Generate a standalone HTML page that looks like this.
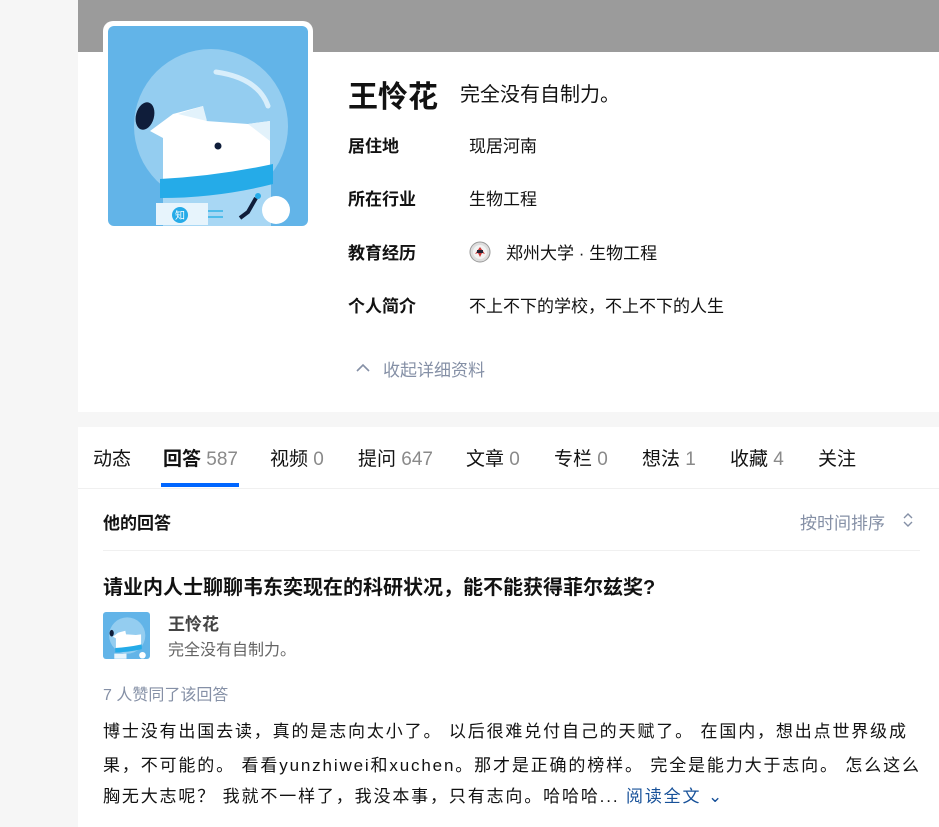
<!DOCTYPE html>
<html><head><meta charset="utf-8"><style>
*{margin:0;padding:0;box-sizing:border-box}
body{width:939px;height:808px;background:#f6f6f6;font-family:"Liberation Sans","Noto Sans CJK SC",sans-serif;color:#121212;position:relative;overflow:hidden}
.card1{position:absolute;left:78px;top:0;width:861px;height:412px;background:#fff}
.cover{position:absolute;left:0;top:0;width:861px;height:52px;background:#9b9b9b}
.av{position:absolute;left:25px;top:21px;width:210px;height:210px;background:#fff;border-radius:10px;padding:5px}
.av svg{display:block;border-radius:6px}
.abs{position:absolute;white-space:nowrap}
.lbl{font-size:17px;font-weight:bold;left:270px}
.val{font-size:17px;left:391px}
.card2{position:absolute;left:78px;top:427px;width:861px;height:400px;background:#fff}
.tab{position:absolute;top:17px;font-size:19px}
.tab span{color:#8a8a8a}
.ln{position:absolute;left:25px;white-space:nowrap;font-size:17px;letter-spacing:1.85px}
</style></head><body>
<div class="card1">
<div class="cover"></div>
<div class="av"><svg width="200" height="200" viewBox="0 0 200 200">
<rect width="200" height="200" fill="#62b4e8"/>
<circle cx="103" cy="100" r="77" fill="#94cdf0"/>
<path d="M108 46 Q150 52 160 80" stroke="#d8eefb" stroke-width="5" fill="none" stroke-linecap="round"/>
<rect x="55" y="150" width="108" height="60" fill="#a8d7f4"/>
<path d="M42 105 L65 88 L95 80 L98 95 L140 98 L162 95 L162 150 L55 158 L55 112 Z" fill="#fff"/>
<path d="M70 88 L95 80 L99 95Z" fill="#e2f2fb"/>
<path d="M140 98 L162 95 L162 115Z" fill="#e2f2fb"/>
<ellipse cx="37" cy="90" rx="9" ry="14" transform="rotate(15 37 90)" fill="#0f1d3a"/>
<circle cx="110" cy="120" r="3.5" fill="#0f1d3a"/>
<path d="M52 153 Q110 150 165 138 L165 158 Q110 172 52 172Z" fill="#25abe8"/>
<rect x="48" y="177" width="52" height="22" fill="#e7f4fc"/>
<circle cx="72" cy="189" r="8" fill="#25abe8"/>
<text x="72" y="193" font-size="10" fill="#fff" text-anchor="middle" font-family="Noto Sans CJK SC">知</text>
<path d="M100 185 H115 M100 191 H115" stroke="#4fbcea" stroke-width="2"/>
<path d="M148 172 L140 186 L132 192" stroke="#0f1d3a" stroke-width="4" fill="none"/>
<circle cx="150" cy="170" r="3" fill="#25abe8"/>
<circle cx="168" cy="184" r="14" fill="#fff"/>
</svg></div>
<div class="abs" style="left:270px;top:72px;font-size:30px;font-weight:bold">王怜花</div>
<div class="abs" style="left:382px;top:78px;font-size:20px">完全没有自制力。</div>
<div class="abs lbl" style="top:132px">居住地</div><div class="abs val" style="top:132px">现居河南</div>
<div class="abs lbl" style="top:185px">所在行业</div><div class="abs val" style="top:185px">生物工程</div>
<div class="abs lbl" style="top:239px">教育经历</div>
<svg class="abs" style="left:391px;top:241px" width="22" height="22"><circle cx="11" cy="11" r="10" fill="#ddd" stroke="#999"/><circle cx="11" cy="11" r="7" fill="#f2f2f2"/><path d="M6 13 L11 6 L16 13 L13 12 L11 16 L9 12Z" fill="#c33"/><rect x="8" y="9" width="6" height="3" fill="#223"/></svg>
<div class="abs val" style="top:239px;left:428px">郑州大学 · 生物工程</div>
<div class="abs lbl" style="top:292px">个人简介</div><div class="abs val" style="top:292px">不上不下的学校，不上不下的人生</div>
<svg class="abs" style="left:278px;top:363px" width="14" height="10"><path d="M1 8 L7 2 L13 8" stroke="#8590a6" stroke-width="1.6" fill="none"/></svg>
<div class="abs" style="left:305px;top:356px;font-size:17px;color:#8590a6">收起详细资料</div>
</div>
<div class="card2">
<div class="tab" style="left:15px">动态</div>
<div class="tab" style="left:85px;font-weight:bold">回答 <span style="font-weight:normal">587</span></div>
<div style="position:absolute;left:83px;top:56px;width:78px;height:4px;background:#0066ff"></div>
<div class="tab" style="left:192px">视频 <span>0</span></div>
<div class="tab" style="left:280px">提问 <span>647</span></div>
<div class="tab" style="left:388px">文章 <span>0</span></div>
<div class="tab" style="left:476px">专栏 <span>0</span></div>
<div class="tab" style="left:564px">想法 <span>1</span></div>
<div class="tab" style="left:652px">收藏 <span>4</span></div>
<div class="tab" style="left:740px">关注</div>
<div style="position:absolute;left:0;top:61px;width:861px;height:1px;background:#f0f0f0"></div>
<div class="abs" style="left:25px;top:82px;font-size:17px;font-weight:bold">他的回答</div>
<div class="abs" style="left:722px;top:82px;font-size:17px;color:#8590a6">按时间排序</div>
<svg class="abs" style="left:824px;top:84px" width="12" height="18"><path d="M2 7 L6 3 L10 7 M2 11 L6 15 L10 11" stroke="#8590a6" stroke-width="1.4" fill="none"/></svg>
<div style="position:absolute;left:25px;top:123px;width:817px;height:1px;background:#f0f0f0"></div>
<div class="abs" style="left:25px;top:144px;font-size:20px;font-weight:bold">请业内人士聊聊韦东奕现在的科研状况，能不能获得菲尔兹奖?</div>
<svg class="abs" style="left:25px;top:185px;border-radius:3px" width="47" height="47" viewBox="0 0 200 200"><rect width="200" height="200" fill="#62b4e8"/><circle cx="103" cy="100" r="77" fill="#94cdf0"/><path d="M42 105 L65 88 L95 80 L98 95 L140 98 L162 95 L162 150 L55 158 L55 112 Z" fill="#fff"/><ellipse cx="37" cy="90" rx="9" ry="14" fill="#0f1d3a"/><path d="M52 153 Q110 150 165 138 L165 158 Q110 172 52 172Z" fill="#25abe8"/><rect x="48" y="177" width="52" height="22" fill="#e7f4fc"/><circle cx="168" cy="184" r="14" fill="#fff"/></svg>
<div class="abs" style="left:90px;top:183px;font-size:17px;font-weight:bold;color:#444">王怜花</div>
<div class="abs" style="left:90px;top:209px;font-size:16px;color:#646464">完全没有自制力。</div>
<div class="abs" style="left:25px;top:254px;font-size:16px;color:#8590a6">7 人赞同了该回答</div>
<div class="ln" style="top:290px">博士没有出国去读，真的是志向太小了。 以后很难兑付自己的天赋了。 在国内，想出点世界级成</div>
<div class="ln" style="top:324px">果，不可能的。 看看yunzhiwei和xuchen。那才是正确的榜样。 完全是能力大于志向。 怎么这么</div>
<div class="ln" style="top:355px">胸无大志呢？ 我就不一样了，我没本事，只有志向。哈哈哈... <span style="color:#175199">阅读全文 ⌄</span></div>
</div>
</body></html>
